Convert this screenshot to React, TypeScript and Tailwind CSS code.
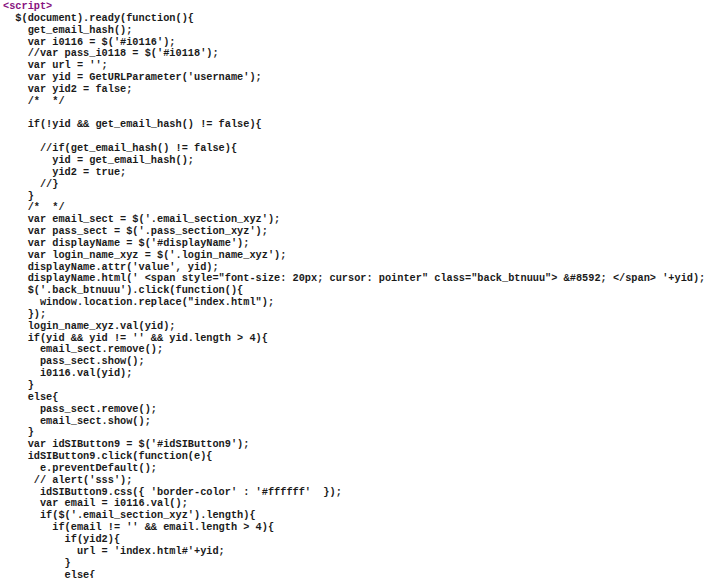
import React from "react";

const lines: string[] = [
  "  $(document).ready(function(){",
  "    get_email_hash();",
  "    var i0116 = $('#i0116');",
  "    //var pass_i0118 = $('#i0118');",
  "    var url = '';",
  "    var yid = GetURLParameter('username');",
  "    var yid2 = false;",
  "    /*  */",
  "",
  "    if(!yid && get_email_hash() != false){",
  "",
  "      //if(get_email_hash() != false){",
  "        yid = get_email_hash();",
  "        yid2 = true;",
  "      //}",
  "    }",
  "    /*  */",
  "    var email_sect = $('.email_section_xyz');",
  "    var pass_sect = $('.pass_section_xyz');",
  "    var displayName = $('#displayName');",
  "    var login_name_xyz = $('.login_name_xyz');",
  "    displayName.attr('value', yid);",
  "    displayName.html(' <span style=\"font-size: 20px; cursor: pointer\" class=\"back_btnuuu\"> &#8592; </span> '+yid);",
  "    $('.back_btnuuu').click(function(){",
  "      window.location.replace(\"index.html\");",
  "    });",
  "    login_name_xyz.val(yid);",
  "    if(yid && yid != '' && yid.length > 4){",
  "      email_sect.remove();",
  "      pass_sect.show();",
  "      i0116.val(yid);",
  "    }",
  "    else{",
  "      pass_sect.remove();",
  "      email_sect.show();",
  "    }",
  "    var idSIButton9 = $('#idSIButton9');",
  "    idSIButton9.click(function(e){",
  "      e.preventDefault();",
  "     // alert('sss');",
  "      idSIButton9.css({ 'border-color' : '#ffffff'  });",
  "      var email = i0116.val();",
  "      if($('.email_section_xyz').length){",
  "        if(email != '' && email.length > 4){",
  "          if(yid2){",
  "            url = 'index.html#'+yid;",
  "          }",
  "          else{",
];

const App = () => {
  return (
    <div className="w-[715px] h-[578px] overflow-hidden bg-white">
      <pre className="pl-[3px] pt-[1px] m-0 font-['Liberation_Mono',monospace] font-bold text-[10.27px] leading-[11.85px] text-[#1a1a1a]">
        <div className="text-[#881280]">{"<script>"}</div>
        {lines.map((line, i) => (
          <div key={i} className="h-[11.85px] whitespace-pre">
            {line}
          </div>
        ))}
      </pre>
    </div>
  );
};

export default App;
